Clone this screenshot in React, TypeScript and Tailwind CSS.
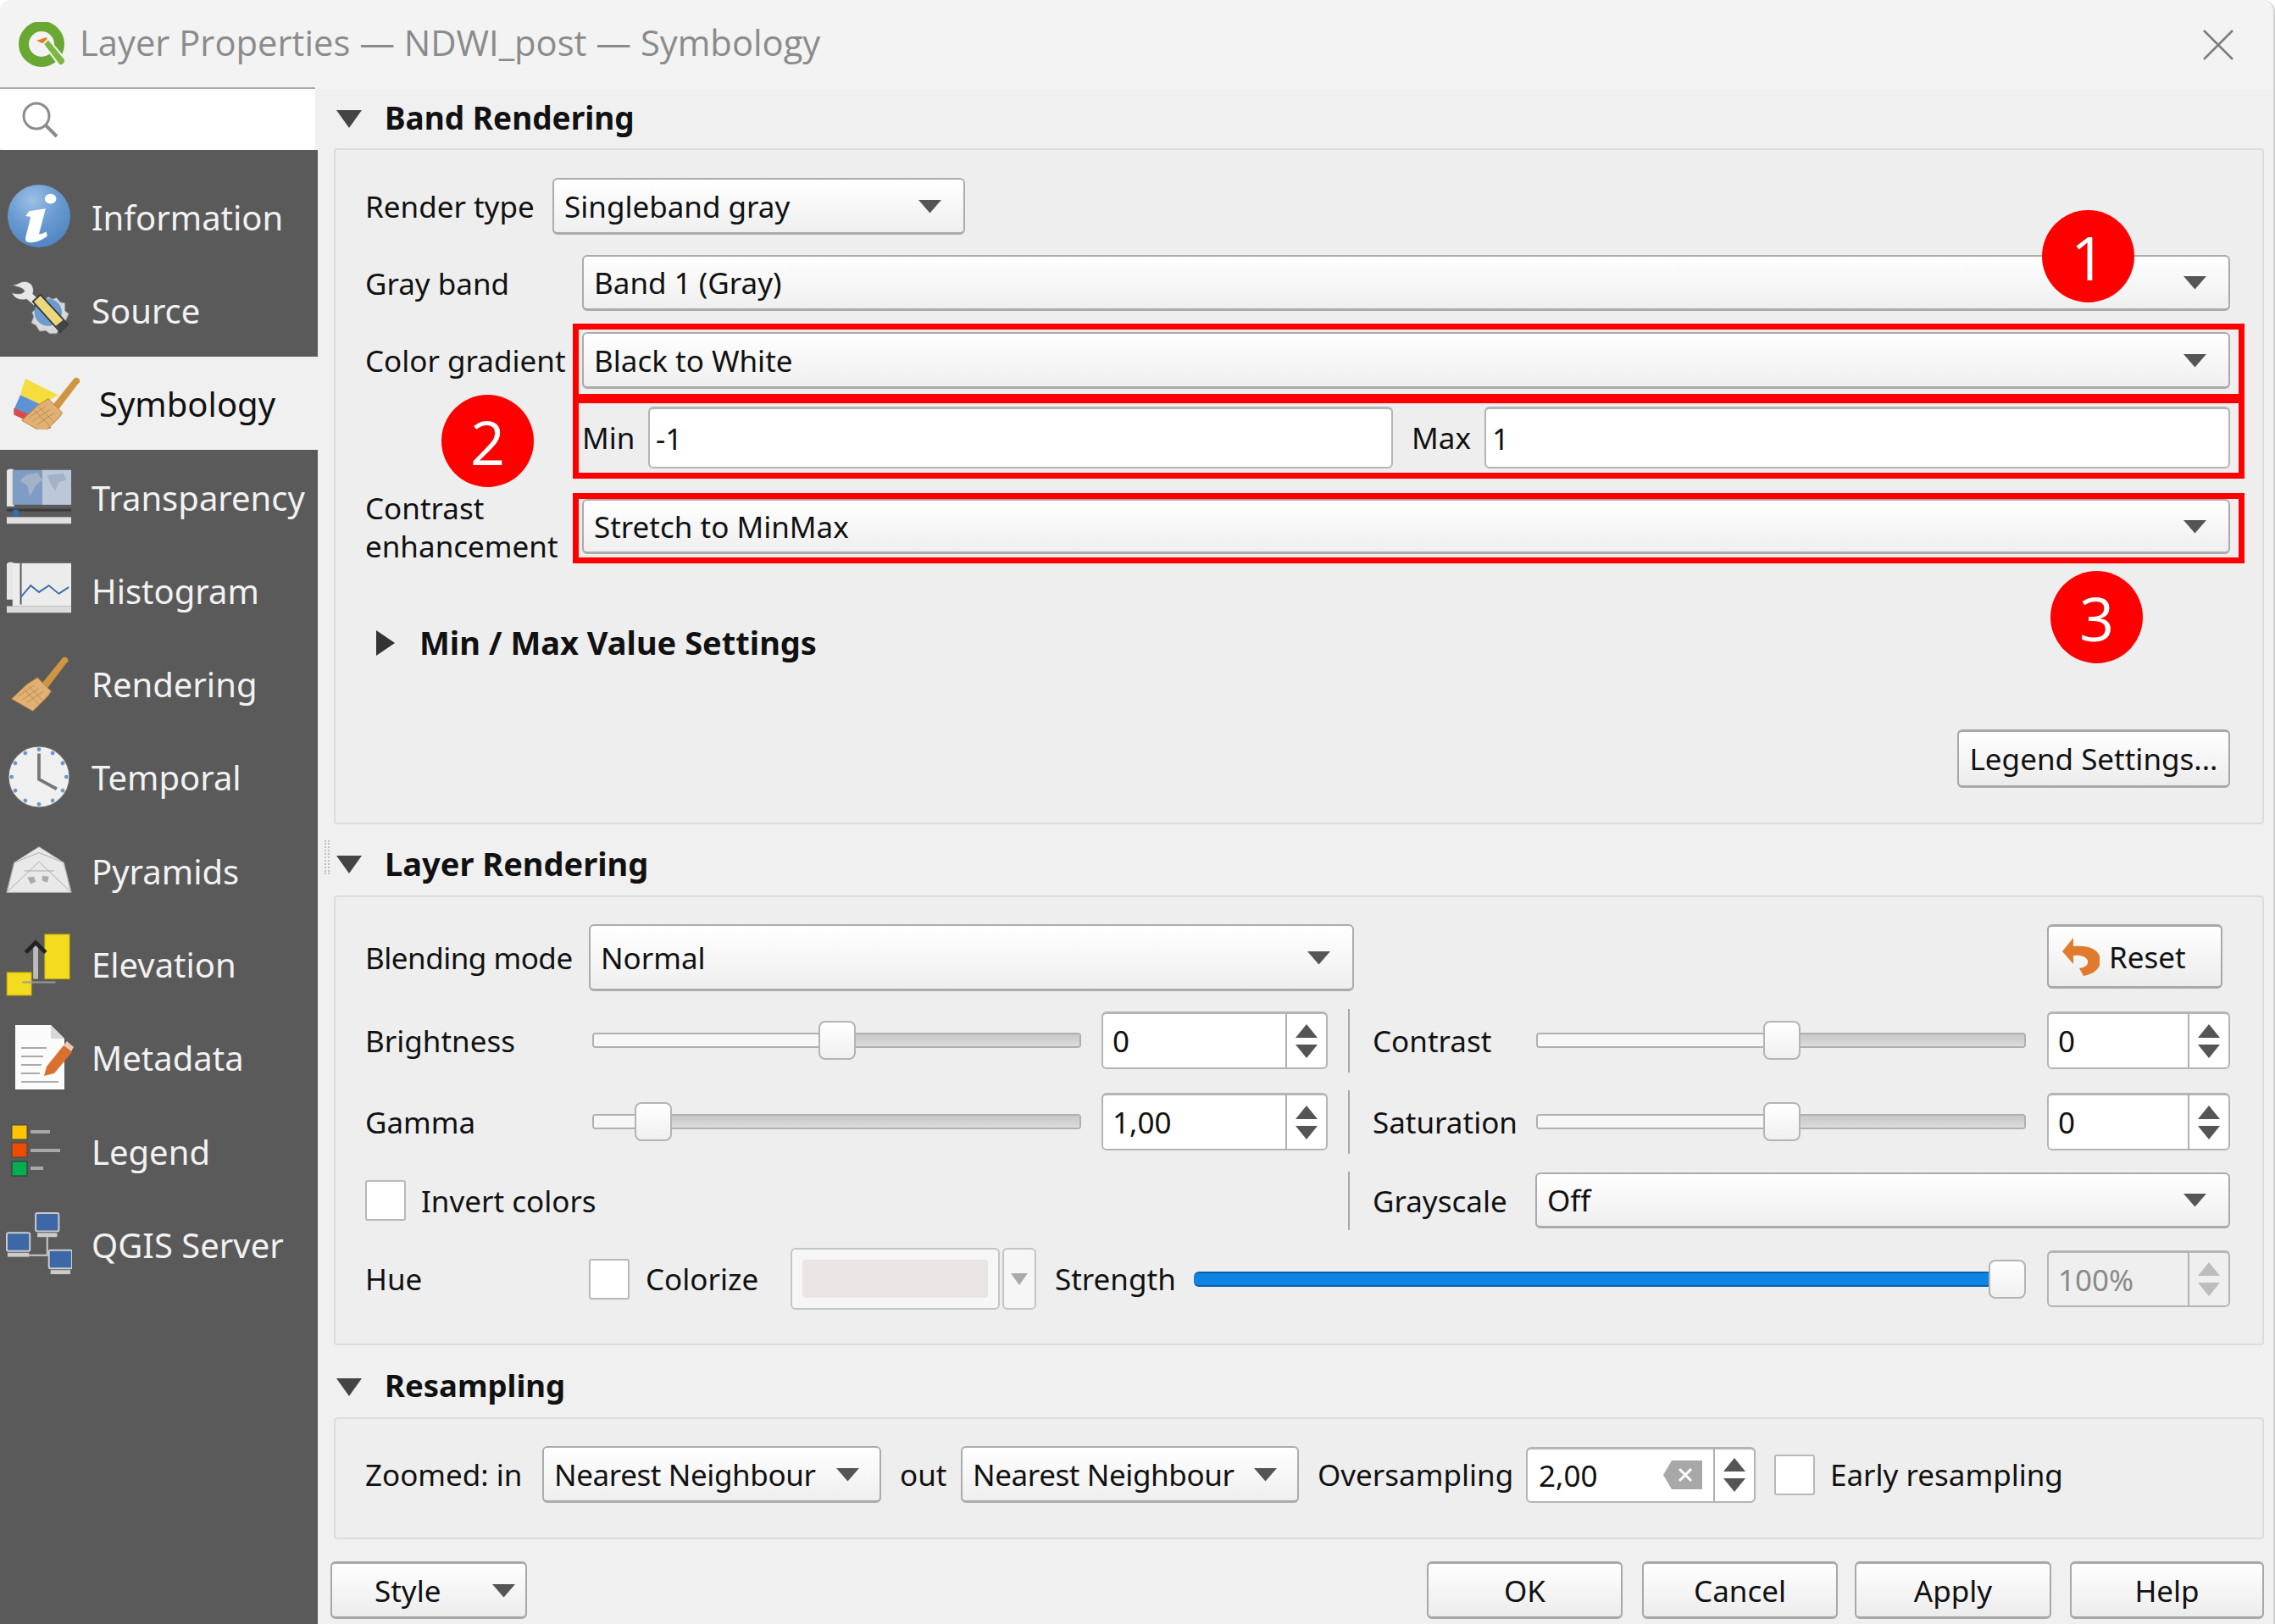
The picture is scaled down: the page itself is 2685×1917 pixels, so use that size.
import React from "react";

const ui = "font-['Noto_Sans',sans-serif] text-[35px] leading-none text-[#111] whitespace-nowrap";

function Arrow({ className = "" }: { className?: string }) {
  return (
    <svg width="27" height="17" viewBox="0 0 27 17" className={`shrink-0 ${className}`}>
      <path d="M0 1h27L13.5 16.500z" fill="#555" />
    </svg>
  );
}

function Combo({ text, className = "" }: { text: string; className?: string }) {
  return (
    <div
      className={`flex items-center justify-between rounded-[6px] border-2 border-[#ababab] border-b-[3px] bg-gradient-to-b from-white to-[#efefef] pl-[12px] pr-[26px] ${className}`}
    >
      <span>{text}</span>
      <Arrow />
    </div>
  );
}

function SpinArrows({ disabled = false }: { disabled?: boolean }) {
  const fill = disabled ? "#bdbdbd" : "#555";
  return (
    <div className="flex h-full w-[48px] shrink-0 flex-col items-center justify-center gap-[6px] border-l-2 border-[#b0b0b0]">
      <svg width="26" height="18" viewBox="0 0 26 18">
        <path d="M13 1l13 16H0z" fill={fill} />
      </svg>
      <svg width="26" height="18" viewBox="0 0 26 18">
        <path d="M0 1h26L13 17z" fill={fill} />
      </svg>
    </div>
  );
}

function Spin({ text, className = "", disabled = false }: { text: string; className?: string; disabled?: boolean }) {
  return (
    <div
      className={`flex items-center rounded-[6px] border-2 border-[#b4b4b4] border-t-[3px] ${disabled ? "bg-[#efefef] text-[#8a8a8a]" : "bg-white"} ${className}`}
    >
      <span className="flex-1 pl-[11px]">{text}</span>
      <SpinArrows disabled={disabled} />
    </div>
  );
}

function Slider({ pos, className = "" }: { pos: number; className?: string }) {
  return (
    <div className={`relative h-[18px] ${className}`}>
      <div className="flex h-full overflow-hidden rounded-[4px] border-2 border-[#b0b0b0]">
        <div className="bg-[#f7f7f7]" style={{ width: pos }} />
        <div className="flex-1 bg-gradient-to-b from-[#c8c8c8] to-[#dcdcdc]" />
      </div>
      <div
        className="absolute top-[-14px] h-[46px] w-[44px] rounded-[8px] border-2 border-[#b4b4b4] bg-gradient-to-b from-white to-[#f0f0f0]"
        style={{ left: pos - 22 }}
      />
    </div>
  );
}

function Check({ className = "" }: { className?: string }) {
  return <div className={`h-[48px] w-[48px] shrink-0 rounded-[3px] border-2 border-[#b8b8b8] bg-white ${className}`} />;
}

function Btn({ text, className = "", children }: { text: string; className?: string; children?: React.ReactNode }) {
  return (
    <div
      className={`flex h-[68px] items-center justify-center rounded-[6px] border-2 border-[#a8a8a8] border-t-[3px] border-b-[3px] bg-gradient-to-b from-white to-[#ececec] ${className}`}
    >
      {children}
      {text}
    </div>
  );
}

function Section({ title, className = "", size = "text-[37px]" }: { title: string; className?: string; size?: string }) {
  return (
    <div className={`flex items-center ${className}`}>
      <svg width="30" height="22" viewBox="0 0 30 22" className="ml-[3px] shrink-0">
        <path d="M0 1h30L15 22z" fill="#444" />
      </svg>
      <span className={`ml-[27px] pb-[3px] font-bold ${size}`}>{title}</span>
    </div>
  );
}

function VSep({ className = "" }: { className?: string }) {
  return <div className={`w-[2px] shrink-0 bg-[#a8a8a8] ${className}`} />;
}

/* sidebar icons, all drawn on an 80x80 box */
const InfoIcon = (
  <svg viewBox="0 0 80 80" className="h-full w-full">
    <defs>
      <radialGradient id="inf" cx="40%" cy="25%" r="80%">
        <stop offset="0" stopColor="#9cc0e6" />
        <stop offset="0.5" stopColor="#6a9bd2" />
        <stop offset="1" stopColor="#4f83c0" />
      </radialGradient>
    </defs>
    <circle cx="40" cy="40" r="38" fill="url(#inf)" />
    <ellipse cx="54" cy="19" rx="7" ry="6" fill="#fff" />
    <path d="M28 34l20-3-8 31c4 0 7-2 9-3l1 5c-6 5-13 8-21 8-5 0-6-3-5-7l6-24-6-1z" fill="#fff" />
  </svg>
);
const SourceIcon = (
  <svg viewBox="0 0 80 80" className="h-full w-full">
    <path d="M46 30l6-6 6 3 5-2 5 6 6 1v10l5 4-4 9 1 7-9 3-4 7h-9l-5-4-8 1-5-8-6-3 3-8-2-6 6-5z" fill="#d8d8d8" stroke="#999" />
    <circle cx="52" cy="44" r="18" fill="#6d9bd0" />
    <path d="M4 8c8 1 12-6 20-4 8 2 10 10 8 16l8 7-7 8-9-8c-8 2-16 0-20-9 7 3 15 2 17-2-3-5-10-5-17-8z" fill="#e6e6e6" stroke="#666" />
    <path d="M32 30l10-9 36 39-10 10z" fill="#ecd77a" stroke="#333" strokeWidth="2" />
    <path d="M62 62l10-8 6 7-9 9z" fill="#444" />
  </svg>
);
const Brush = (
  <g>
    <path d="M38 47L71 6c2-2 6-1 7 2 1 2 0 4-2 5L45 54z" fill="#cf9540" />
    <path d="M24 41l14-9 18 18-4 6-20 20-28-16z" fill="#e0b074" stroke="#b87c2c" />
    <path d="M12 57l22-15M18 61l22-15M24 65l22-15M20 47l20 20M26 43l20 20" stroke="#bd8a4a" strokeWidth="1" />
  </g>
);
const SymbologyIcon = (
  <svg viewBox="0 0 82 64" className="h-full w-full">
    <path d="M14 2l40 20-20 12L8 22z" fill="#f4dd3c" />
    <path d="M8 22l26 12-14 16L0 40z" fill="#5f92d2" />
    <path d="M0 38l24 10 22 14-8 2L0 46z" fill="#d94b48" />
    <g transform="translate(6 -4) scale(.95)">{Brush}</g>
  </svg>
);
const TransparencyIcon = (
  <svg viewBox="0 0 80 70" className="h-full w-full">
    <path d="M1 4c2-3 5-3 9-1v44H1z" fill="#e6e6e6" />
    <rect x="8" y="3" width="71" height="42" fill="#7f9cc4" />
    <rect x="44" y="3" width="35" height="42" fill="#d0d6e0" opacity=".75" />
    <path d="M24 9l14-3 6 9-8 7-7 13-3-13-9-6zM50 9l20-2 3 8-9 3-4 10-6-8z" fill="#a3b2c8" />
    <rect x="1" y="50" width="78" height="3" fill="#222" opacity=".55" />
    <circle cx="12" cy="55" r="4" fill="#2d6fb8" />
    <rect x="1" y="60" width="78" height="8" fill="#e0e0e0" />
  </svg>
);
const HistogramIcon = (
  <svg viewBox="0 0 80 70" className="h-full w-full">
    <path d="M1 4c2-3 5-3 9-1v44H1z" fill="#e6e6e6" />
    <rect x="8" y="3" width="71" height="52" fill="#ececec" />
    <rect x="1" y="55" width="78" height="8" fill="#dcdcdc" />
    <path d="M18 3v50" stroke="#555" strokeWidth="2" />
    <path d="M18 44l12-14 10 8 12-8 12 10 12-8" stroke="#3c6ea8" strokeWidth="2" fill="none" />
  </svg>
);
const RenderingIcon = (
  <svg viewBox="0 0 80 80" className="h-full w-full">
    {Brush}
  </svg>
);
const TemporalIcon = (
  <svg viewBox="0 0 80 80" className="h-full w-full">
    <circle cx="40" cy="40" r="38" fill="#f0f0f0" stroke="#666" strokeWidth="1.500" />
    {[0, 30, 60, 90, 120, 150, 180, 210, 240, 270, 300, 330].map((a) => (
      <circle key={a} cx="40" cy="6" r="2.500" fill="#6d96c8" transform={`rotate(${a} 40 40)`} />
    ))}
    <path d="M40 11v32l22 12" stroke="#777" strokeWidth="4" fill="none" />
  </svg>
);
const PyramidsIcon = (
  <svg viewBox="0 0 80 58" className="h-full w-full">
    <path d="M40 1L70 20l9 36H1l9-36z" fill="#e9e9e9" stroke="#bbb" />
    <path d="M40 8L10 20 1 56M40 8l30 12 9 36M2 55l38-36 38 36M22 30h36" stroke="#aaa" fill="none" />
    <path d="M26 38l8-1 2 6-6 3zM44 36l8 1-2 7-6-2z" fill="#aaa" />
  </svg>
);
const ElevationIcon = (
  <svg viewBox="0 0 80 80" className="h-full w-full">
    <rect x="47" y="4" width="30" height="54" fill="#f3dc20" stroke="#c4a800" />
    <rect x="1" y="50" width="30" height="28" fill="#f3dc20" stroke="#a89000" />
    <path d="M36 58V14" stroke="#bbb" strokeWidth="6" fill="none" />
    <path d="M24 26l12-12 12 12" stroke="#222" strokeWidth="5" fill="none" />
    <path d="M20 62h40" stroke="#999" strokeWidth="2" />
  </svg>
);
const MetadataIcon = (
  <svg viewBox="0 0 70 78" className="h-full w-full">
    <path d="M1 1h42l16 16v60H1z" fill="#fbfbfb" />
    <path d="M43 1v16h16z" fill="#d8d8d8" />
    <path d="M8 28h30M8 38h26M8 48h24M8 58h22M8 68h44" stroke="#aaa" strokeWidth="2" />
    <path d="M38 50l20-25 10 8-21 25-12 3z" fill="#d9702e" />
    <path d="M58 25l4-5 8 7-3 5z" fill="#f0c8b0" />
  </svg>
);
const LegendIcon = (
  <svg viewBox="0 0 58 62" className="h-full w-full">
    <rect x="1" y="1" width="18" height="17" fill="#fdc400" stroke="#444" />
    <rect x="1" y="22" width="18" height="17" fill="#ee4a00" stroke="#444" />
    <rect x="1" y="44" width="18" height="17" fill="#00b050" stroke="#333" />
    <path d="M23 9h23M23 31h35M23 52h15" stroke="#a8a8a8" strokeWidth="4" />
  </svg>
);
const ServerIcon = (
  <svg viewBox="0 0 80 76" className="h-full w-full">
    <rect x="36" y="1" width="28" height="22" rx="2" fill="#3c68a8" stroke="#ccc" strokeWidth="2" />
    <rect x="38" y="25" width="24" height="5" fill="#ccc" />
    <rect x="1" y="25" width="28" height="22" rx="2" fill="#3c68a8" stroke="#ccc" strokeWidth="2" />
    <rect x="2" y="49" width="26" height="5" fill="#ccc" />
    <rect x="52" y="46" width="28" height="22" rx="2" fill="#3c68a8" stroke="#ccc" strokeWidth="2" />
    <rect x="54" y="70" width="24" height="5" fill="#ccc" />
    <path d="M50 30v22H28" stroke="#ccc" strokeWidth="2" fill="none" />
  </svg>
);

const items = [
  { label: "Information", icon: InfoIcon, box: "w-[78px] h-[78px]" },
  { label: "Source", icon: SourceIcon, box: "w-[78px] h-[72px]" },
  { label: "Symbology", icon: SymbologyIcon, box: "w-[82px] h-[62px]", active: true },
  { label: "Transparency", icon: TransparencyIcon, box: "w-[78px] h-[70px]" },
  { label: "Histogram", icon: HistogramIcon, box: "w-[78px] h-[70px]" },
  { label: "Rendering", icon: RenderingIcon, box: "w-[78px] h-[72px]" },
  { label: "Temporal", icon: TemporalIcon, box: "w-[78px] h-[76px]" },
  { label: "Pyramids", icon: PyramidsIcon, box: "w-[78px] h-[58px]" },
  { label: "Elevation", icon: ElevationIcon, box: "w-[78px] h-[78px]" },
  { label: "Metadata", icon: MetadataIcon, box: "w-[70px] h-[78px] ml-[10px] mr-[-2px]" },
  { label: "Legend", icon: LegendIcon, box: "w-[58px] h-[62px] ml-[6px] mr-[14px]" },
  { label: "QGIS Server", icon: ServerIcon, box: "w-[78px] h-[76px]" },
];

function Sidebar() {
  return (
    <div className="flex w-[375px] shrink-0 flex-col bg-[#f0f0f0]">
      <div className="flex h-[72px] w-[372px] items-center rounded-b-[4px] bg-white pl-[25px] shadow-[0_-2px_0_#aaa]">
        <svg width="44" height="44" viewBox="0 0 44 44" fill="none" stroke="#8c8c8c">
          <circle cx="18" cy="18" r="15" strokeWidth="3" />
          <path d="M29 29l13 13" strokeWidth="4" />
        </svg>
      </div>
      <div className="flex flex-1 flex-col bg-[#5a5a5a] pt-[23px]">
        {items.map((it) => (
          <div
            key={it.label}
            className={`flex h-[110.3px] items-center ${it.active ? "bg-[#f0f0f0] pl-[15px] text-[#111]" : "pl-[7px] text-[#f2f2f2]"}`}
          >
            <div className="flex w-[82px] shrink-0 justify-start">
              <div className={it.box}>{it.icon}</div>
            </div>
            <span className={`pt-[3px] text-[40px] ${it.active ? "ml-[20px]" : "ml-[19px]"}`}>{it.label}</span>
          </div>
        ))}
      </div>
    </div>
  );
}

function BandRendering() {
  return (
    <div className="flex flex-col rounded-[4px] border-2 border-[#dcdcdc] bg-[#eeeeee] pb-[41px] pl-[35px] pr-[38px] pt-[33px]">
      <div className="flex h-[67px] items-center">
        <span className="w-[221px] shrink-0">Render type</span>
        <Combo text="Singleband gray" className="h-full w-[487px]" />
      </div>
      <div className="mt-[24px] flex h-[66px] items-center">
        <span className="w-[256px] shrink-0">Gray band</span>
        <Combo text="Band 1 (Gray)" className="h-full flex-1" />
      </div>
      <div className="mt-[25px] flex h-[67px] items-center">
        <span className="w-[256px] shrink-0">Color gradient</span>
        <Combo text="Black to White" className="h-full flex-1" />
      </div>
      <div className="ml-[256px] mt-[21px] flex h-[73px] items-center">
        <span className="w-[78px] shrink-0">Min</span>
        <input readOnly value="-1" className="h-full w-[879px] rounded-[6px] border-2 border-[#b4b4b4] border-t-[3px] bg-white pl-[7px] outline-none" />
        <span className="ml-[22px] w-[86px] shrink-0">Max</span>
        <input readOnly value="1" className="h-full flex-1 rounded-[6px] border-2 border-[#b4b4b4] border-t-[3px] bg-white pl-[7px] outline-none" />
      </div>
      <div className="mt-[36px] flex h-[65px] items-center">
        <span className="w-[256px] shrink-0 leading-[45px]">
          Contrast
          <br />
          enhancement
        </span>
        <Combo text="Stretch to MinMax" className="h-full flex-1" />
      </div>
      <div className="mt-[85px] flex h-[40px] items-center">
        <svg width="23" height="30" viewBox="0 0 23 30" className="ml-[12px] shrink-0">
          <path d="M1 0l22 15L1 30z" fill="#333" />
        </svg>
        <span className="ml-[29px] pb-[3px] text-[38px] font-bold">Min / Max Value Settings</span>
      </div>
      <div className="mt-[82px] flex justify-end">
        <Btn text="Legend Settings..." className="h-[69px] w-[322px]" />
      </div>
    </div>
  );
}

function LayerRendering() {
  return (
    <div className="flex flex-col rounded-[4px] border-2 border-[#dcdcdc] bg-[#eeeeee] pb-[40px] pl-[35px] pr-[38px] pt-[32px]">
      <div className="flex h-[79px] items-start">
        <span className="flex h-full w-[264px] shrink-0 items-center tracking-[-0.5px]">Blending mode</span>
        <Combo text="Normal" className="h-full w-[903px]" />
        <Btn text="Reset" className="ml-auto mr-[9px] h-[76px] w-[207px] gap-[11px] !justify-start pl-[14px]">
          <svg width="46" height="46" viewBox="0 0 46 46" className="shrink-0">
            <path
              d="M15 1L2 17l13 15V22c9-1 15 1 17 6 1 5-3 8-10 9l5 9c11-2 20-8 20-18C47 16 35 9 15 11z"
              fill="#e07b2e"
            />
          </svg>
        </Btn>
      </div>
      <div className="mt-[24px] flex h-[68px] items-center">
        <span className="w-[268px] shrink-0">Brightness</span>
        <Slider pos={289} className="w-[577px] shrink-0" />
        <Spin text="0" className="ml-[24px] h-full w-[267px]" />
        <VSep className="ml-[24px] h-[75px]" />
        <span className="ml-[27px] w-[193px] shrink-0">Contrast</span>
        <Slider pos={290} className="w-[578px] shrink-0" />
        <Spin text="0" className="ml-[25px] h-full flex-1" />
      </div>
      <div className="mt-[28px] flex h-[68px] items-center">
        <span className="w-[268px] shrink-0">Gamma</span>
        <Slider pos={72} className="w-[577px] shrink-0" />
        <Spin text="1,00" className="ml-[24px] h-full w-[267px]" />
        <VSep className="ml-[24px] h-[75px]" />
        <span className="ml-[27px] w-[193px] shrink-0">Saturation</span>
        <Slider pos={290} className="w-[578px] shrink-0" />
        <Spin text="0" className="ml-[25px] h-full flex-1" />
      </div>
      <div className="mt-[26px] flex h-[66px] items-center">
        <Check />
        <span className="ml-[18px] w-[1094px] shrink-0">Invert colors</span>
        <VSep className="h-[69px]" />
        <span className="ml-[27px] w-[192px] shrink-0">Grayscale</span>
        <Combo text="Off" className="h-full flex-1" />
      </div>
      <div className="mt-[23px] flex h-[73px] items-center">
        <span className="w-[264px] shrink-0">Hue</span>
        <Check />
        <span className="ml-[19px] w-[171px] shrink-0">Colorize</span>
        <div className="h-full w-[247px] shrink-0 rounded-[6px] border-2 border-[#c4c4c4] bg-[#f6f6f6] p-[12px]">
          <div className="h-full rounded-[4px] bg-[#ebe4e4]" />
        </div>
        <div className="ml-[3px] flex h-full w-[40px] shrink-0 items-center justify-center rounded-[6px] border-2 border-[#c4c4c4] bg-[#f6f6f6]">
          <svg width="20" height="16" viewBox="0 0 20 16">
            <path d="M0 1h20L10 15z" fill="#aaa" />
          </svg>
        </div>
        <span className="ml-[22px] w-[164px] shrink-0">Strength</span>
        <div className="relative h-[18px] w-[982px] shrink-0 rounded-[6px] border-y-2 border-[#0b5fa8] bg-[#0d84e4]">
          <div className="absolute right-0 top-[-16px] h-[46px] w-[44px] rounded-[8px] border-2 border-[#b4b4b4] bg-gradient-to-b from-white to-[#f0f0f0]" />
        </div>
        <Spin text="100%" disabled className="ml-[25px] h-[67px] flex-1" />
      </div>
    </div>
  );
}

function Resampling() {
  return (
    <div className="flex flex-col rounded-[4px] border-2 border-[#dcdcdc] bg-[#eeeeee] pb-[41px] pl-[35px] pr-[38px] pt-[32px]">
      <div className="flex h-[67px] items-center">
        <span className="w-[209px] shrink-0">Zoomed: in</span>
        <Combo text="Nearest Neighbour" className="h-full w-[400px] !pr-[24px] !pl-[12px] tracking-[-0.4px]" />
        <span className="ml-[22px] w-[72px] shrink-0">out</span>
        <Combo text="Nearest Neighbour" className="h-full w-[399px] !pr-[24px] !pl-[12px] tracking-[-0.4px]" />
        <span className="ml-[22px] w-[246px] shrink-0">Oversampling</span>
        <div className="flex h-[66px] w-[271px] shrink-0 items-center rounded-[6px] border-2 border-[#b4b4b4] border-t-[3px] bg-white">
          <span className="flex-1 pl-[13px]">2,00</span>
          <svg width="46" height="36" viewBox="0 0 46 36" className="mr-[13px] shrink-0">
            <path d="M10 1h36v34H10L0 18z" fill="#a8a8a8" />
            <path d="M19 11l14 14M33 11L19 25" stroke="#fff" strokeWidth="3" />
          </svg>
          <SpinArrows />
        </div>
        <Check className="ml-[22px]" />
        <span className="ml-[18px]">Early resampling</span>
      </div>
    </div>
  );
}

export default function App() {
  return (
    <div className={`relative flex h-[1917px] w-[2685px] flex-col overflow-hidden rounded-t-[14px] border-r-2 border-[#d0d0d0] bg-[#f0f0f0] ${ui}`}>
      {/* title bar */}
      <div className="flex h-[105px] shrink-0 items-center justify-between bg-[#f3f3f3] pl-[21px] pr-[47px]">
        <div className="flex items-center">
          <svg width="58" height="54" viewBox="0 0 58 54">
            <circle cx="28" cy="26" r="21" fill="none" stroke="#6aa834" strokeWidth="12" />
            <path d="M22 22l12-4 2 10z" fill="#ee7913" />
            <path d="M30 26l6-6 20 24c1 4-3 8-7 7z" fill="#7cb742" stroke="#f3f3f3" strokeWidth="2" />
          </svg>
          <span className="ml-[15px] pb-[5px] font-['Open_Sans',sans-serif] text-[41.750px] text-[#8b8b8b]">
            Layer Properties — NDWI_post — Symbology
          </span>
        </div>
        <svg width="36" height="36" viewBox="0 0 36 36" stroke="#7d7d7d" strokeWidth="2.500">
          <path d="M1 1l34 34M35 1L1 35" />
        </svg>
      </div>

      <div className="flex min-h-0 flex-1">
        <Sidebar />
        <div className="flex flex-1 flex-col pl-[19px] pr-[11px]">
          <Section title="Band Rendering" className="h-[70px] shrink-0" />
          <BandRendering />
          <Section title="Layer Rendering" size="text-[38px]" className="h-[84px] shrink-0 pt-[10px]" />
          <LayerRendering />
          <Section title="Resampling" size="text-[36.500px]" className="h-[85px] shrink-0 pt-[12px]" />
          <Resampling />
          <div className="ml-[-4px] mt-[26px] flex items-center">
            <div className="flex h-[68px] w-[232px] items-center justify-between rounded-[6px] border-2 border-[#a8a8a8] border-t-[3px] border-b-[3px] bg-gradient-to-b from-white to-[#ececec] pl-[50px] pr-[12px]">
              <span>Style</span>
              <Arrow />
            </div>
            <Btn text="OK" className="ml-auto w-[231px]" />
            <Btn text="Cancel" className="ml-[23px] w-[231px]" />
            <Btn text="Apply" className="ml-[20px] w-[232px]" />
            <Btn text="Help" className="ml-[22px] w-[229px]" />
          </div>
        </div>
      </div>

      {/* annotation overlay */}
      <div className="absolute left-[676px] top-[382px] h-[90px] w-[1973px] border-[7px] border-[#ff0000]" />
      <div className="absolute left-[676px] top-[469px] h-[96px] w-[1973px] border-[7px] border-[#ff0000]" />
      <div className="absolute left-[676px] top-[582px] h-[83px] w-[1973px] border-[7px] border-[#ff0000]" />
      <div className="absolute left-[2410px] top-[248px] flex h-[109px] w-[109px] items-center justify-center rounded-full bg-[#ff0000] font-['Open_Sans',sans-serif] text-[72px] text-white">
        1
      </div>
      <div className="absolute left-[521px] top-[466px] flex h-[109px] w-[109px] items-center justify-center rounded-full bg-[#ff0000] font-['Open_Sans',sans-serif] text-[72px] text-white">
        2
      </div>
      <div className="absolute left-[2420px] top-[674px] flex h-[109px] w-[109px] items-center justify-center rounded-full bg-[#ff0000] font-['Open_Sans',sans-serif] text-[72px] text-white">
        3
      </div>
      {/* splitter handle */}
      <div className="absolute left-[383px] top-[992px] h-[40px] w-[6px] border-x-2 border-dotted border-[#c0c0c0]" />
    </div>
  );
}
